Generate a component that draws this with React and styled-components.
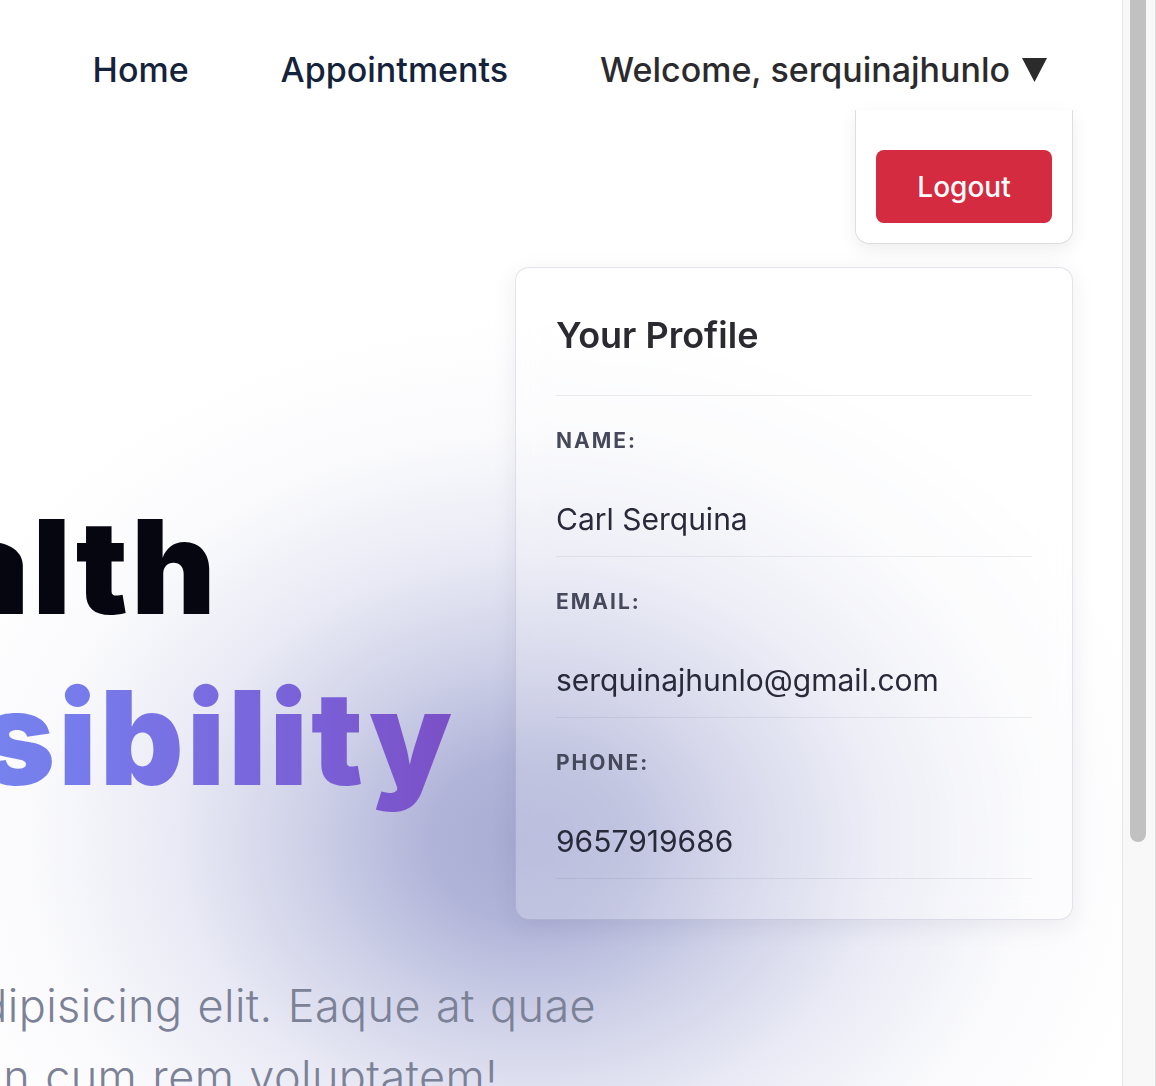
import styled, { createGlobalStyle } from 'styled-components';

const GlobalStyle = createGlobalStyle`
  html, body {
    margin: 0;
    padding: 0;
    overflow: hidden;
    background: #ffffff;
  }
  body {
    font-family: Inter, "Noto Sans", sans-serif;
  }
  * {
    box-sizing: border-box;
  }
`;

const Window = styled.div`
  display: flex;
  width: 1156px;
  height: 1086px;
  overflow: hidden;
`;

const Page = styled.main`
  position: relative;
  flex: 1;
  min-width: 0;
  overflow: hidden;
  background:
    radial-gradient(
      ellipse 640px 520px at 530px 840px,
      #a7abd3 0%,
      rgba(170, 174, 213, 0.92) 16%,
      rgba(188, 191, 223, 0.74) 34%,
      rgba(210, 212, 234, 0.5) 55%,
      rgba(234, 235, 245, 0.24) 78%,
      rgba(255, 255, 255, 0) 100%
    ),
    #ffffff;
`;

const Header = styled.header`
  display: flex;
  justify-content: flex-end;
  align-items: center;
  gap: 92px;
  height: 140px;
  padding-right: 75px;
`;

const NavLink = styled.a`
  position: relative;
  display: flex;
  align-items: center;
  gap: 12px;
  font-size: 34px;
  line-height: 48px;
  font-weight: 500;
  color: ${({ $muted }) => ($muted ? '#2b2b2e' : '#15223b')};
  text-decoration: none;
  white-space: nowrap;
`;

const Caret = styled.svg`
  width: 25px;
  height: 24px;
  fill: #2b2b2b;
`;

const Dropdown = styled.div`
  position: absolute;
  top: calc(100% + 16px);
  right: -26px;
  width: 218px;
  padding: 40px 20px 20px;
  background: #ffffff;
  border: 1px solid #dedede;
  border-top: none;
  border-radius: 0 0 14px 14px;
  box-shadow: 0 6px 18px rgba(0, 0, 0, 0.07);
`;

const LogoutButton = styled.button`
  display: block;
  width: 176px;
  height: 73px;
  border: none;
  border-radius: 8px;
  background: #d52b40;
  color: #ffffff;
  font-family: inherit;
  font-size: 28px;
  font-weight: 500;
  cursor: pointer;
`;

const Body = styled.section`
  display: flex;
  align-items: flex-start;
  gap: 70px;
  padding: 127px 49px 0 0;
`;

const Hero = styled.div`
  flex: 1;
  min-width: 0;
  margin-top: 214px;
  margin-left: -446px;
`;

const Title = styled.h1`
  margin: 0;
  font-size: 130px;
  line-height: 171px;
  font-weight: 900;
  letter-spacing: 3px;
  white-space: nowrap;
`;

const TitleLine = styled.span`
  display: block;
  width: max-content;
  color: #05060f;
  ${({ $accent }) =>
    $accent &&
    `
    background: linear-gradient(90deg, #5f8cf7 0%, #7393f5 30%, #7779ea 60%, #7a5fd6 85%, #7b4fc6 100%);
    -webkit-background-clip: text;
    background-clip: text;
    color: transparent;
  `}
`;

const Lead = styled.p`
  margin: 147px 0 0;
  font-size: 45px;
  line-height: 71px;
  font-weight: 300;
  letter-spacing: 0.4px;
  word-spacing: 2px;
  color: #7b8196;
  white-space: nowrap;
`;

const Card = styled.aside`
  flex: 0 0 558px;
  padding: 40px 40px 40px;
  border: 1px solid rgba(60, 64, 110, 0.14);
  border-radius: 14px;
  background: rgba(255, 255, 255, 0.22);
  backdrop-filter: blur(14px);
  box-shadow: 0 6px 24px rgba(40, 44, 80, 0.08);
`;

const CardTitle = styled.h2`
  margin: 4px 0 0;
  padding-bottom: 37px;
  border-bottom: 1px solid rgba(40, 44, 80, 0.09);
  font-size: 36px;
  line-height: 46px;
  font-weight: 600;
  color: #2a2a30;
`;

const Field = styled.div`
  display: flex;
  flex-direction: column;
  gap: 43px;
  padding: 30px 0 17px;
  border-bottom: 1px solid rgba(40, 44, 80, 0.08);
`;

const FieldLabel = styled.span`
  font-size: 21px;
  line-height: 30px;
  font-weight: 700;
  letter-spacing: 2px;
  text-transform: uppercase;
  color: #46495b;
`;

const FieldValue = styled.span`
  font-size: 30px;
  line-height: 40px;
  font-weight: 400;
  color: #282a3a;
`;

const Scrollbar = styled.div`
  flex: 0 0 34px;
  background: #f8f8f8;
  border-left: 1px solid #e6e6e6;
  border-right: 1px solid #dcdcdc;
  padding-left: 7px;
`;

const Thumb = styled.div`
  width: 16px;
  height: 842px;
  background: #c1c1c1;
  border-radius: 0 0 8px 8px;
`;

const profile = [
  { label: 'Name:', value: 'Carl Serquina' },
  { label: 'Email:', value: 'serquinajhunlo@gmail.com' },
  { label: 'Phone:', value: '9657919686' },
];

export default function App() {
  return (
    <>
      <GlobalStyle />
      <Window>
        <Page>
          <Header>
            <NavLink href="#">Home</NavLink>
            <NavLink href="#">Appointments</NavLink>
            <NavLink as="div" $muted>
              Welcome, serquinajhunlo
              <Caret viewBox="0 0 25 24" aria-hidden="true">
                <polygon points="0,0 25,0 12.5,24" />
              </Caret>
              <Dropdown>
                <LogoutButton>Logout</LogoutButton>
              </Dropdown>
            </NavLink>
          </Header>

          <Body>
            <Hero>
              <Title>
                <TitleLine>Go Health</TitleLine>
                <TitleLine $accent>Accessibility</TitleLine>
              </Title>
              <Lead>
                Lorem ipsum odio adipisicing elit. Eaque at quae
                <br />
                laudantium dolorem in cum rem voluptatem!
              </Lead>
            </Hero>

            <Card>
              <CardTitle>Your Profile</CardTitle>
              {profile.map((item) => (
                <Field key={item.label}>
                  <FieldLabel>{item.label}</FieldLabel>
                  <FieldValue>{item.value}</FieldValue>
                </Field>
              ))}
            </Card>
          </Body>
        </Page>
        <Scrollbar>
          <Thumb />
        </Scrollbar>
      </Window>
    </>
  );
}
